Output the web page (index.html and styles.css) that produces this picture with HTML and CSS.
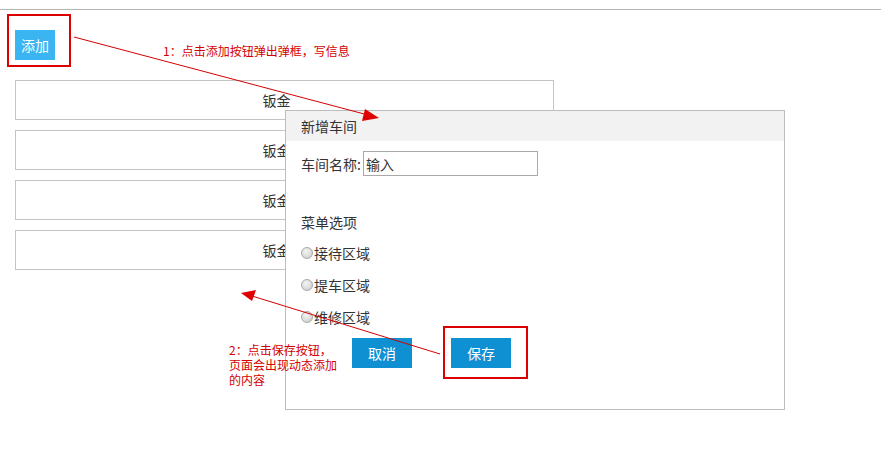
FILE: index.html
```html
<!DOCTYPE html>
<html lang="zh-CN">
<head>
<meta charset="utf-8">
<title>车间管理</title>
<link rel="stylesheet" href="styles.css">
</head>
<body>
<div class="topline"></div>
<main class="page">
  <div class="toolbar">
    <button class="btn-add" type="button">添加</button>
  </div>
  <ul class="list">
    <li class="item">钣金</li>
    <li class="item">钣金</li>
    <li class="item">钣金</li>
    <li class="item">钣金</li>
  </ul>
</main>

<section class="dialog">
  <header class="dialog-head">新增车间</header>
  <div class="dialog-body">
    <div class="field">
      <label class="field-label">车间名称:</label>
      <input class="field-input" type="text" value="输入">
    </div>
    <div class="section-title">菜单选项</div>
    <label class="radio-row"><span class="radio"></span>接待区域</label>
    <label class="radio-row"><span class="radio"></span>提车区域</label>
    <label class="radio-row"><span class="radio"></span>维修区域</label>
    <div class="actions">
      <button class="btn" type="button">取消</button>
      <button class="btn" type="button">保存</button>
    </div>
  </div>
</section>

<div class="mark mark-add"></div>
<div class="mark mark-save"></div>
<p class="note note-1">1：点击添加按钮弹出弹框，写信息</p>
<p class="note note-2">2：点击保存按钮，<br>页面会出现动态添加<br>的内容</p>

<svg class="arrows" width="881" height="453" viewBox="0 0 881 453">
  <line x1="74" y1="37" x2="368" y2="115" stroke="#d40000" stroke-width="1"/>
  <polygon points="379,118 365,109 362,121" fill="#e00000"/>
  <line x1="440" y1="354" x2="252" y2="296" stroke="#d40000" stroke-width="1"/>
  <polygon points="241,293 256,290 252,301" fill="#e00000"/>
</svg>
</body>
</html>
```

FILE: styles.css
```css
html, body {
  margin: 0;
  padding: 0;
  background: #fff;
}
body {
  width: 881px;
  height: 453px;
  position: relative;
  overflow: hidden;
  font-family: "Noto Sans CJK SC", "Noto Sans", sans-serif;
  font-size: 14px;
  color: #333;
}
.topline {
  margin-top: 9px;
  border-top: 1px solid #b4b4b4;
}
.page {
  padding: 20px 0 0 15px;
}
.toolbar {
  display: flex;
}
.btn-add {
  width: 40px;
  height: 30px;
  padding: 0;
  border: none;
  background: #3bb4f2;
  color: #fff;
  font-family: inherit;
  font-size: 14px;
}
.list {
  list-style: none;
  margin: 20px 0 0;
  padding: 0;
  width: 539px;
  display: flex;
  flex-direction: column;
  gap: 10px;
}
.item {
  height: 38px;
  line-height: 38px;
  padding-right: 16px;
  border: 1px solid #c4c4c4;
  text-align: center;
  color: #333;
}

/* dialog */
.dialog {
  position: absolute;
  left: 285px;
  top: 110px;
  width: 498px;
  height: 298px;
  border: 1px solid #bdbdbd;
  background: #fff;
}
.dialog-head {
  height: 30px;
  line-height: 30px;
  padding-left: 15px;
  background: #f2f2f2;
  color: #333;
}
.dialog-body {
  padding: 10px 15px 0;
  display: flex;
  flex-direction: column;
}
.field {
  display: flex;
  align-items: center;
  height: 25px;
}
.field-label {
  margin-right: 2px;
}
.field-input {
  box-sizing: border-box;
  width: 175px;
  height: 25px;
  margin: 0;
  padding: 0 2px;
  border: 1px solid #a9a9a9;
  font-family: inherit;
  font-size: 14px;
  color: #333;
  outline: none;
}
.section-title {
  margin-top: 36px;
  height: 20px;
  line-height: 20px;
}
.radio-row {
  margin-top: 12px;
  height: 20px;
  line-height: 20px;
  display: flex;
  align-items: center;
}
.section-title + .radio-row {
  margin-top: 11px;
}
.radio {
  box-sizing: border-box;
  width: 12px;
  height: 12px;
  border-radius: 50%;
  border: 1px solid #a8a8a8;
  background: radial-gradient(circle at 40% 35%, #f4f4f4 0%, #d6d6d6 70%, #c6c6c6 100%);
  margin-right: 1px;
}
.actions {
  margin-top: 11px;
  padding-left: 51px;
  display: flex;
  gap: 39px;
}
.btn {
  width: 60px;
  height: 30px;
  padding: 0;
  border: none;
  background: #0e90d2;
  color: #fff;
  font-family: inherit;
  font-size: 14px;
}

/* annotations */
.mark {
  position: absolute;
  box-sizing: border-box;
  border: 2px solid #dd0000;
}
.mark-add {
  left: 7px;
  top: 14px;
  width: 64px;
  height: 53px;
}
.mark-save {
  left: 443px;
  top: 326px;
  width: 85px;
  height: 53px;
}
.note {
  position: absolute;
  margin: 0;
  color: #d40000;
  font-size: 12px;
  line-height: 15px;
}
.note-1 {
  left: 163px;
  top: 43px;
}
.note-2 {
  left: 229px;
  top: 342px;
}
.arrows {
  position: absolute;
  left: 0;
  top: 0;
  pointer-events: none;
}
```
